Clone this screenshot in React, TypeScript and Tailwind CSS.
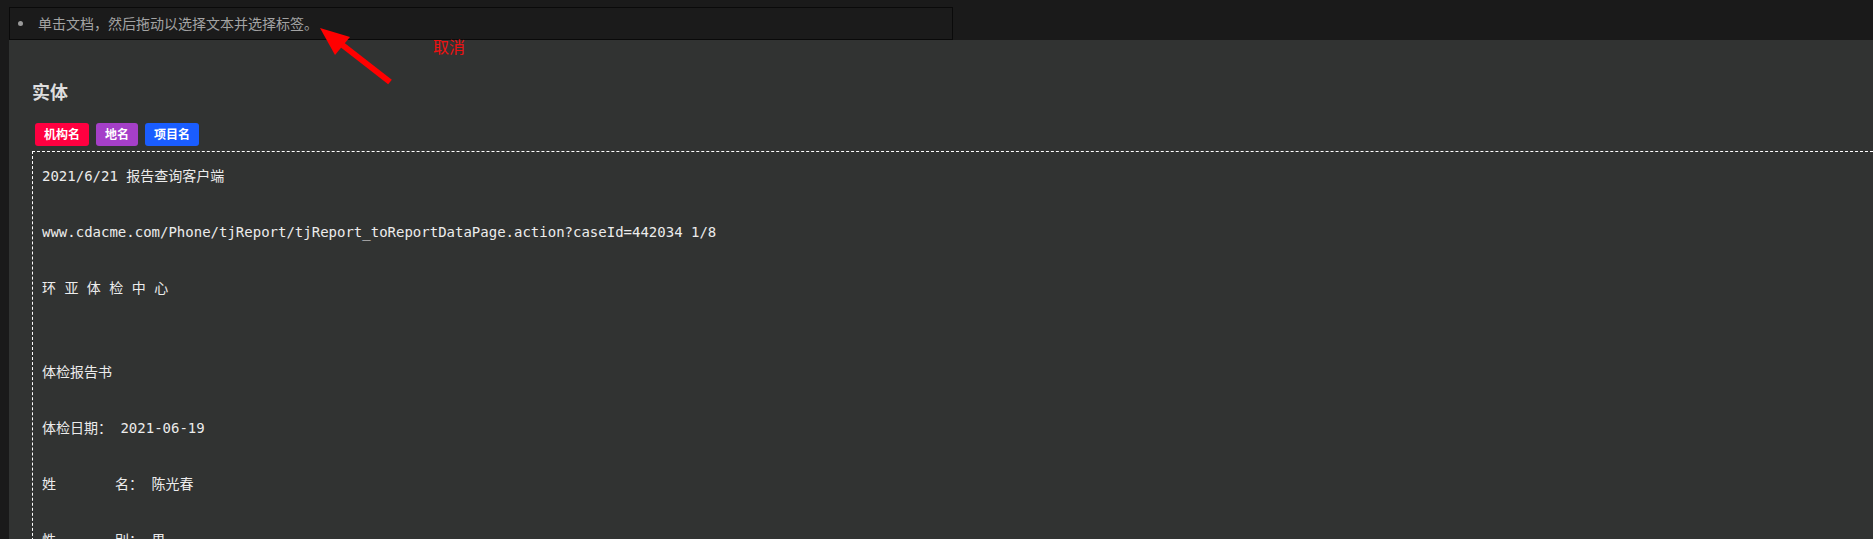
import React from 'react';

const TAGS = [
  { label: '机构名', color: 'bg-[#ff0040]' },
  { label: '地名', color: 'bg-[#a53fc8]' },
  { label: '项目名', color: 'bg-[#1a5dff]' },
];

const DOC_TEXT = `2021/6/21 报告查询客户端

www.cdacme.com/Phone/tjReport/tjReport_toReportDataPage.action?caseId=442034 1/8

环 亚 体 检 中 心


体检报告书

体检日期： 2021-06-19

姓       名： 陈光春

性       别： 男`;

const App: React.FC = () => {
  return (
    <div className="relative min-h-screen h-[539px] overflow-hidden bg-[#1a1a1a] font-['Noto_Sans','Noto_Sans_CJK_SC',sans-serif]">
      {/* Hint bar */}
      <div className="h-[40px] pl-[9px] pt-[7px]">
        <div className="w-[944px] h-[33px] border border-[#0a0a0a] bg-[#1b1b1b] flex items-center pl-[8px]">
          <span className="w-[5px] h-[5px] rounded-full bg-[#9a9a9a] mr-[15px]" />
          <span className="text-[#a3a3a3] text-[14px] leading-none">单击文档，然后拖动以选择文本并选择标签。</span>
        </div>
      </div>

      {/* Main panel */}
      <div className="ml-[9px] bg-[#313332] pl-[23px] pt-[38px] h-[499px]">
        <h2 className="text-[#dedede] text-[18px] font-bold leading-[28px]">实体</h2>

        <div className="flex gap-[7px] mt-[17px] ml-[3px]">
          {TAGS.map(t => (
            <span
              key={t.label}
              className={`${t.color} h-[23px] px-[9px] rounded-[3px] flex items-center text-white text-[12px] font-bold`}
            >
              {t.label}
            </span>
          ))}
        </div>

        <div className="mt-[5px] border border-dashed border-white border-r-0 pl-[9px] pt-[10px] h-[400px]">
          <pre className="text-[#ececec] text-[14px] leading-[28px] font-['DejaVu_Sans_Mono','Noto_Sans_CJK_SC',monospace] whitespace-pre">
            {DOC_TEXT}
          </pre>
        </div>
      </div>

      {/* Annotation overlay */}
      <svg className="absolute left-0 top-0 pointer-events-none" width="480" height="100" viewBox="0 0 480 100">
        <line x1="390" y1="82" x2="336" y2="40" stroke="#ff0000" strokeWidth="6" />
        <polygon points="320,28 350,37 335,55" fill="#ff0000" />
      </svg>
      <span className="absolute left-[433px] top-[35px] text-[#ee1111] text-[16px] leading-[22px] font-['Noto_Sans_CJK_SC',sans-serif]">
        取消
      </span>
    </div>
  );
};

export default App;
